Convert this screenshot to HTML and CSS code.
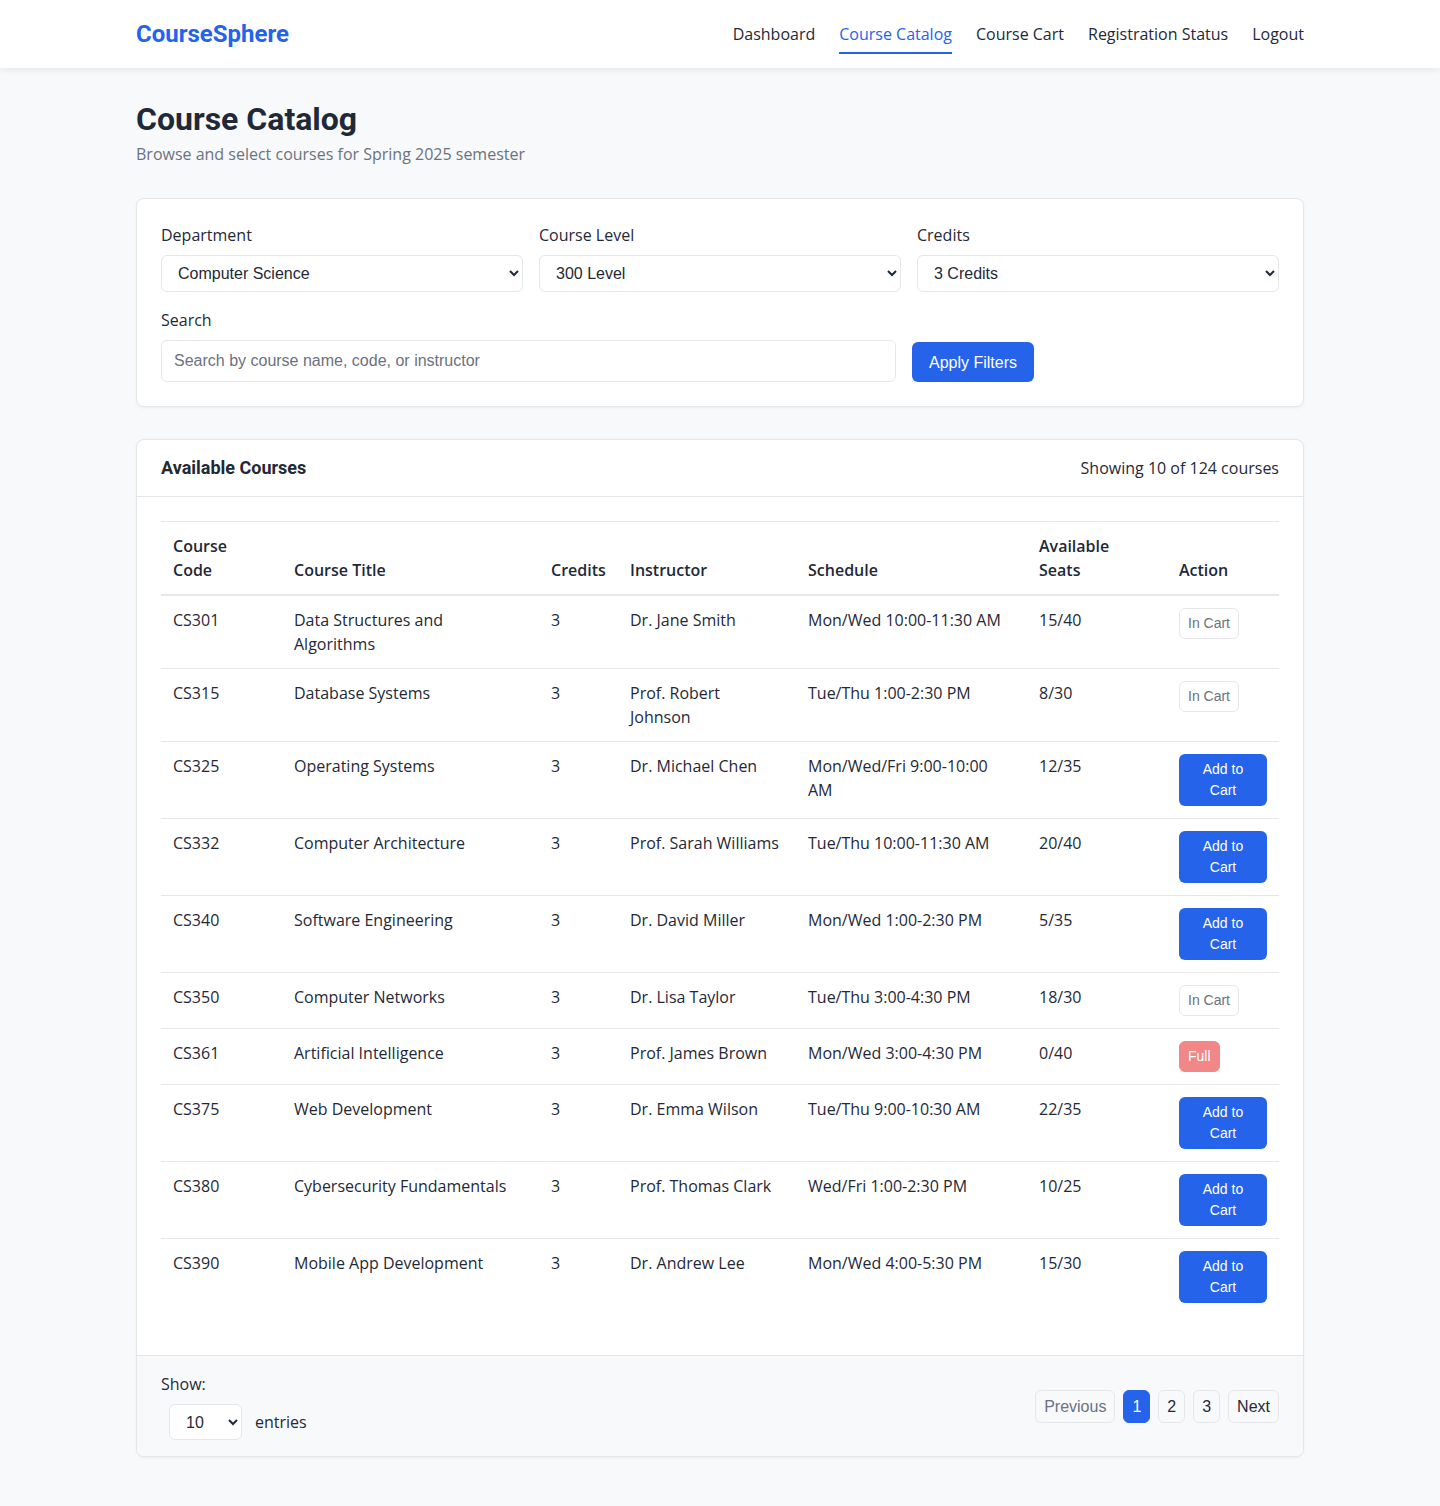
FILE: index.html
```html
<!DOCTYPE html>
<html lang="en">
<head>
<meta charset="utf-8">
<title>CourseSphere - Course Catalog</title>
<link rel="stylesheet" href="styles.css">
</head>
<body>
<header class="topbar">
  <div class="container topbar-inner">
    <div class="logo">CourseSphere</div>
    <nav class="nav">
      <a href="#" class="nav-link">Dashboard</a>
      <a href="#" class="nav-link active">Course Catalog</a>
      <a href="#" class="nav-link">Course Cart</a>
      <a href="#" class="nav-link">Registration Status</a>
      <a href="#" class="nav-link">Logout</a>
    </nav>
  </div>
</header>

<main class="container main">
  <h1 class="page-title">Course Catalog</h1>
  <p class="page-sub">Browse and select courses for Spring 2025 semester</p>

  <section class="card filters">
    <div class="filter-grid">
      <div class="field">
        <label class="label">Department</label>
        <select class="select"><option>Computer Science</option></select>
      </div>
      <div class="field">
        <label class="label">Course Level</label>
        <select class="select"><option>300 Level</option></select>
      </div>
      <div class="field">
        <label class="label">Credits</label>
        <select class="select"><option>3 Credits</option></select>
      </div>
    </div>
    <div class="search-row">
      <div class="field search-field">
        <label class="label">Search</label>
        <input class="input" type="text" placeholder="Search by course name, code, or instructor">
      </div>
      <button class="btn-primary">Apply Filters</button>
    </div>
  </section>

  <section class="card courses">
    <div class="courses-head">
      <h2 class="courses-title">Available Courses</h2>
      <span class="courses-count">Showing 10 of 124 courses</span>
    </div>
    <div class="courses-body">
      <table class="table">
        <colgroup>
          <col class="c-code"><col class="c-title"><col class="c-cred"><col class="c-inst"><col class="c-sched"><col class="c-seats"><col class="c-act">
        </colgroup>
        <thead>
          <tr><th>Course Code</th><th>Course Title</th><th>Credits</th><th>Instructor</th><th>Schedule</th><th><span class="th-wrap">Available Seats</span></th><th>Action</th></tr>
        </thead>
        <tbody>
          <tr><td>CS301</td><td>Data Structures and Algorithms</td><td>3</td><td>Dr. Jane Smith</td><td>Mon/Wed 10:00-11:30 AM</td><td>15/40</td><td><span class="tag tag-cart">In Cart</span></td></tr>
          <tr><td>CS315</td><td>Database Systems</td><td>3</td><td>Prof. Robert Johnson</td><td>Tue/Thu 1:00-2:30 PM</td><td>8/30</td><td><span class="tag tag-cart">In Cart</span></td></tr>
          <tr><td>CS325</td><td>Operating Systems</td><td>3</td><td>Dr. Michael Chen</td><td>Mon/Wed/Fri 9:00-10:00 AM</td><td>12/35</td><td><button class="btn-add">Add to Cart</button></td></tr>
          <tr><td>CS332</td><td>Computer Architecture</td><td>3</td><td>Prof. Sarah Williams</td><td>Tue/Thu 10:00-11:30 AM</td><td>20/40</td><td><button class="btn-add">Add to Cart</button></td></tr>
          <tr><td>CS340</td><td>Software Engineering</td><td>3</td><td>Dr. David Miller</td><td>Mon/Wed 1:00-2:30 PM</td><td>5/35</td><td><button class="btn-add">Add to Cart</button></td></tr>
          <tr><td>CS350</td><td>Computer Networks</td><td>3</td><td>Dr. Lisa Taylor</td><td>Tue/Thu 3:00-4:30 PM</td><td>18/30</td><td><span class="tag tag-cart">In Cart</span></td></tr>
          <tr><td>CS361</td><td>Artificial Intelligence</td><td>3</td><td>Prof. James Brown</td><td>Mon/Wed 3:00-4:30 PM</td><td>0/40</td><td><span class="tag tag-full">Full</span></td></tr>
          <tr><td>CS375</td><td>Web Development</td><td>3</td><td>Dr. Emma Wilson</td><td>Tue/Thu 9:00-10:30 AM</td><td>22/35</td><td><button class="btn-add">Add to Cart</button></td></tr>
          <tr><td>CS380</td><td>Cybersecurity Fundamentals</td><td>3</td><td>Prof. Thomas Clark</td><td>Wed/Fri 1:00-2:30 PM</td><td>10/25</td><td><button class="btn-add">Add to Cart</button></td></tr>
          <tr><td>CS390</td><td>Mobile App Development</td><td>3</td><td>Dr. Andrew Lee</td><td>Mon/Wed 4:00-5:30 PM</td><td>15/30</td><td><button class="btn-add">Add to Cart</button></td></tr>
        </tbody>
      </table>
    </div>
    <div class="courses-foot">
      <div class="show">
        <span class="show-label">Show:</span>
        <div class="show-row">
          <select class="select select-sm"><option>10</option></select>
          <span>entries</span>
        </div>
      </div>
      <div class="pager">
        <button class="page-btn disabled">Previous</button>
        <button class="page-btn current">1</button>
        <button class="page-btn">2</button>
        <button class="page-btn">3</button>
        <button class="page-btn">Next</button>
      </div>
    </div>
  </section>
</main>
</body>
</html>
```

FILE: styles.css
```css
* { box-sizing: border-box; }
html, body { margin: 0; padding: 0; }
body {
  background: #f8f9fb;
  color: #1f2937;
  font-family: "Open Sans", "Noto Sans", sans-serif;
  font-size: 16px;
  line-height: 1.5;
}
.container { width: 1168px; margin: 0 auto; }

.topbar {
  background: #fff;
  height: 68px;
  box-shadow: 0 2px 6px rgba(0, 0, 0, 0.08);
}
.topbar-inner {
  height: 68px;
  display: flex;
  align-items: center;
  justify-content: space-between;
}
.logo {
  font-family: Roboto, "Liberation Sans", sans-serif;
  font-weight: 700;
  font-size: 24px;
  color: #2563eb;
  line-height: 1;
}
.nav { display: flex; gap: 24px; align-items: center; }
.nav-link {
  color: #1f2937;
  text-decoration: none;
  padding: 8px 0 6px;
  border-bottom: 2px solid transparent;
  line-height: 24px;
}
.nav-link.active { color: #2563eb; border-bottom-color: #2563eb; }

.main { padding: 32px 0 48px; }
.page-title {
  font-family: Roboto, "Liberation Sans", sans-serif;
  font-weight: 700;
  font-size: 32px;
  line-height: 38px;
  margin: 0 0 4px;
  color: #1f2937;
}
.page-sub { margin: 0 0 32px; color: #6b7280; }

.card {
  background: #fff;
  border: 1px solid #e5e7eb;
  border-radius: 8px;
  box-shadow: 0 1px 3px rgba(0, 0, 0, 0.05);
}
.filters { padding: 24px; }
.filter-grid {
  display: grid;
  grid-template-columns: repeat(3, 1fr);
  gap: 16px;
  margin-bottom: 16px;
}
.field { display: flex; flex-direction: column; }
.label { margin-bottom: 8px; color: #1f2937; }
.select {
  font-family: "Liberation Sans", Arial, sans-serif;
  font-size: 16px;
  color: #1f2937;
  height: 37px;
  padding: 0 12px;
  border: 1px solid #e5e7eb;
  border-radius: 6px;
  background: #fff;
}
.search-row { display: flex; align-items: flex-end; gap: 16px; }
.search-field { width: 735px; }
.input {
  font-family: "Liberation Sans", Arial, sans-serif;
  font-size: 16px;
  height: 42px;
  padding: 0 12px;
  border: 1px solid #e5e7eb;
  border-radius: 6px;
  color: #1f2937;
}
.input::placeholder { color: #6b7280; }
.btn-primary {
  font-family: "Liberation Sans", Arial, sans-serif;
  font-size: 16px;
  height: 40px;
  padding: 1px 17px 0;
  border: none;
  border-radius: 6px;
  background: #2563eb;
  color: #fff;
}

.courses { margin-top: 32px; overflow: hidden; }
.courses-head {
  display: flex;
  justify-content: space-between;
  align-items: center;
  padding: 16px 24px;
  border-bottom: 1px solid #e5e7eb;
}
.courses-title {
  font-family: Roboto, "Liberation Sans", sans-serif;
  font-size: 18px;
  font-weight: 700;
  line-height: 24px;
  margin: 0;
}
.courses-count { color: #1f2937; }
.courses-body { padding: 24px 24px 40px; }
.table {
  width: 100%;
  border-collapse: collapse;
  table-layout: fixed;
}
.c-code { width: 121px; }
.c-title { width: 257px; }
.c-cred { width: 79px; }
.c-inst { width: 178px; }
.c-sched { width: 231px; }
.c-seats { width: 140px; }
.c-act { width: 112px; }
.table th {
  text-align: left;
  font-weight: 600;
  padding: 12px;
  vertical-align: bottom;
  border-top: 1px solid #e5e7eb;
  border-bottom: 2px solid #e5e7eb;
}
.th-wrap { display: block; max-width: 100px; }
.table td {
  padding: 12px;
  vertical-align: top;
  border-bottom: 1px solid #e5e7eb;
}
.table tbody tr:last-child td { border-bottom: none; }
.btn-add {
  font-family: "Liberation Sans", Arial, sans-serif;
  font-size: 14px;
  line-height: 21px;
  padding: 5px 16px;
  border: none;
  border-radius: 6px;
  background: #2563eb;
  color: #fff;
  max-width: 100%;
}
.tag {
  display: inline-block;
  font-family: "Liberation Sans", Arial, sans-serif;
  font-size: 14px;
  line-height: 21px;
  padding: 4px 8px;
  border: 1px solid #e5e7eb;
  border-radius: 6px;
}
.tag-cart { color: #6b7280; background: #fff; }
.tag-full { color: #fff; background: #f28787; border-color: #f28787; }

.courses-foot {
  display: flex;
  justify-content: space-between;
  align-items: center;
  background: #f8f9fb;
  border-top: 1px solid #e5e7eb;
  padding: 16px 24px 16px;
}
.show { display: flex; flex-direction: column; gap: 8px; }
.show-row { display: flex; align-items: center; gap: 13px; padding-left: 8px; }
.select-sm { width: 73px; height: 36px; padding: 0 12px; }
.pager { display: flex; gap: 8px; }
.page-btn {
  font-family: "Liberation Sans", Arial, sans-serif;
  font-size: 16px;
  line-height: 19px;
  padding: 6px 8px;
  border: 1px solid #e5e7eb;
  border-radius: 6px;
  background: transparent;
  color: #1f2937;
}
.page-btn.disabled { color: #6b7280; }
.page-btn.current { background: #2563eb; border-color: #2563eb; color: #fff; }
```
